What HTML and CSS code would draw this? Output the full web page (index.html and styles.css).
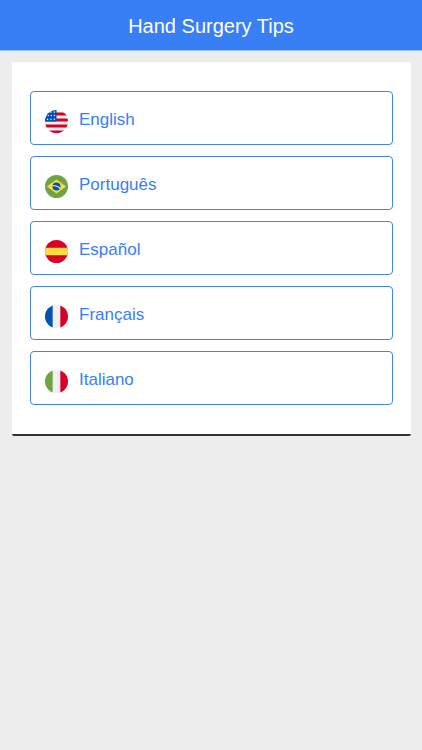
FILE: index.html
```html
<!DOCTYPE html>
<html lang="en">
<head>
  <meta charset="UTF-8" />
  <meta name="viewport" content="width=device-width, initial-scale=1.0"/>
  <title>Hand Surgery Tips</title>
  <link rel="stylesheet" href="styles.css">
</head>
<body>
  <header class="bar">
    <h1 class="title">Hand Surgery Tips</h1>
  </header>

  <main class="card">
    <button class="language" type="button" lang="en">
      <svg class="flag" viewBox="0 0 24 24" aria-hidden="true">
        <clipPath id="circle"><circle cx="12" cy="12" r="12"/></clipPath>
        <g clip-path="url(#circle)">
          <path fill="#f0f0f0" d="M0 0h24v24H0z"/>
          <path fill="#d80027" d="M0 2.6h24v3.1H0zM0 8.9h24V12H0zM0 15.1h24v3.2H0zM0 21.4h24V24H0z"/>
          <path fill="#0052b4" d="M0 0h12v12H0z"/>
          <g fill="#f0f0f0">
            <circle cx="6.2" cy="2.2" r="0.8"/><circle cx="9.8" cy="2.2" r="0.8"/>
            <circle cx="3.4" cy="5.8" r="0.8"/><circle cx="6.6" cy="5.8" r="0.8"/><circle cx="9.8" cy="5.8" r="0.8"/>
            <circle cx="2.6" cy="9.6" r="0.8"/><circle cx="6.2" cy="9.6" r="0.8"/><circle cx="9.8" cy="9.6" r="0.8"/>
          </g>
        </g>
      </svg>
      <span class="name">English</span>
    </button>

    <button class="language" type="button" lang="pt">
      <svg class="flag" viewBox="0 0 24 24" aria-hidden="true">
        <circle cx="12" cy="12" r="12" fill="#6da544"/>
        <path fill="#ffda44" d="M12 4.7L22 12l-10 7.3L2 12z"/>
        <circle cx="12" cy="12" r="4.2" fill="#0052b4"/>
        <path fill="#f0f0f0" d="M8 10.8c2.9-.7 6.3.3 8 2.7l-.6 1.1c-1.7-2.3-4.7-3.3-7.6-2.5z"/>
      </svg>
      <span class="name">Português</span>
    </button>

    <button class="language" type="button" lang="es">
      <svg class="flag" viewBox="0 0 24 24" aria-hidden="true">
        <g clip-path="url(#circle)">
          <path fill="#d80027" d="M0 0h24v24H0z"/>
          <path fill="#ffda44" d="M0 8h24v8H0z"/>
        </g>
      </svg>
      <span class="name">Español</span>
    </button>

    <button class="language" type="button" lang="fr">
      <svg class="flag" viewBox="0 0 24 24" aria-hidden="true">
        <g clip-path="url(#circle)">
          <path fill="#f0f0f0" d="M0 0h24v24H0z"/>
          <path fill="#0052b4" d="M0 0h8v24H0z"/>
          <path fill="#d80027" d="M16 0h8v24h-8z"/>
        </g>
      </svg>
      <span class="name">Français</span>
    </button>

    <button class="language" type="button" lang="it">
      <svg class="flag" viewBox="0 0 24 24" aria-hidden="true">
        <g clip-path="url(#circle)">
          <path fill="#f0f0f0" d="M0 0h24v24H0z"/>
          <path fill="#6da544" d="M0 0h8v24H0z"/>
          <path fill="#d80027" d="M16 0h8v24h-8z"/>
        </g>
      </svg>
      <span class="name">Italiano</span>
    </button>
  </main>
</body>
</html>
```

FILE: styles.css
```css
* {
  box-sizing: border-box;
}

body {
  margin: 0;
  font-family: "Liberation Sans", Arial, sans-serif;
  background-color: #ededed;
}

.bar {
  padding: 14px 12px 12px;
  background-color: #387ef5;
  border-bottom: 1px solid #9fc0f5;
  text-align: center;
}

.title {
  margin: 0;
  font-size: 20px;
  line-height: 24px;
  font-weight: 500;
  color: #fff;
}

.card {
  display: flex;
  flex-direction: column;
  gap: 11px;
  margin: 11px 11px 0 12px;
  padding: 29px 18px;
  background-color: #fff;
  border-bottom: 2px solid #333;
  border-radius: 2px;
}

.language {
  display: flex;
  align-items: flex-start;
  gap: 11px;
  width: 100%;
  padding: 18px 14px 11px;
  border: 1px solid #4a83e0;
  border-radius: 4px;
  background-color: #fff;
  color: #387ef5;
  font-family: inherit;
  font-size: 17px;
  line-height: 20px;
  text-align: left;
  cursor: pointer;
}

.flag {
  flex: none;
  width: 23px;
  height: 23px;
}
```
